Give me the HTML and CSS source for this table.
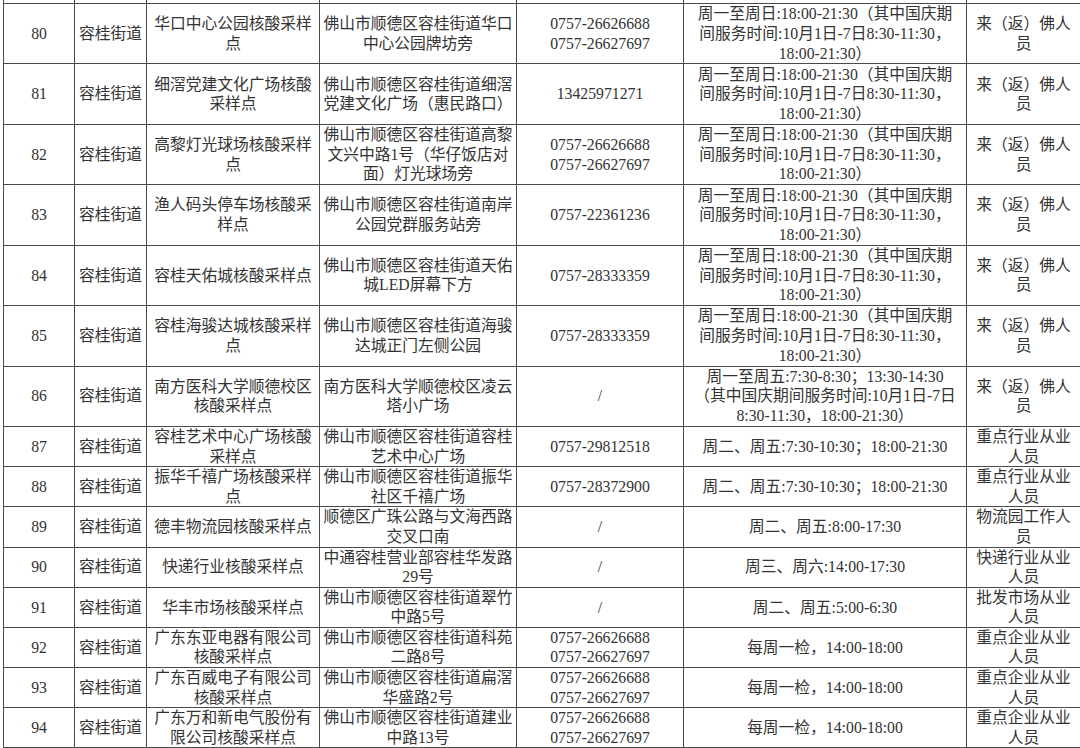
FILE: index.html
```html
<!DOCTYPE html>
<html lang="zh-CN">
<head>
<meta charset="utf-8">
<title>容桂街道核酸采样点</title>
<link rel="stylesheet" href="styles.css">
</head>
<body>
<div class="viewport">
<table class="sites">
<colgroup>
<col class="c-no"><col class="c-street"><col class="c-name"><col class="c-addr"><col class="c-tel"><col class="c-time"><col class="c-who">
</colgroup>
<tbody>
<tr class="cut"><td></td><td></td><td></td><td></td><td></td><td></td><td></td></tr>
<tr class="r3">
<td>80</td><td>容桂街道</td><td>华口中心公园核酸采样<br>点</td><td>佛山市顺德区容桂街道华口<br>中心公园牌坊旁</td><td>0757-26626688<br>0757-26627697</td><td>周一至周日:18:00-21:30（其中国庆期<br>间服务时间:10月1日-7日8:30-11:30，<br>18:00-21:30）</td><td>来（返）佛人<br>员</td>
</tr>
<tr class="r3">
<td>81</td><td>容桂街道</td><td>细滘党建文化广场核酸<br>采样点</td><td>佛山市顺德区容桂街道细滘<br>党建文化广场（惠民路口）</td><td>13425971271</td><td>周一至周日:18:00-21:30（其中国庆期<br>间服务时间:10月1日-7日8:30-11:30，<br>18:00-21:30）</td><td>来（返）佛人<br>员</td>
</tr>
<tr class="r3">
<td>82</td><td>容桂街道</td><td>高黎灯光球场核酸采样<br>点</td><td>佛山市顺德区容桂街道高黎<br>文兴中路1号（华仔饭店对<br>面）灯光球场旁</td><td>0757-26626688<br>0757-26627697</td><td>周一至周日:18:00-21:30（其中国庆期<br>间服务时间:10月1日-7日8:30-11:30，<br>18:00-21:30）</td><td>来（返）佛人<br>员</td>
</tr>
<tr class="r3">
<td>83</td><td>容桂街道</td><td>渔人码头停车场核酸采<br>样点</td><td>佛山市顺德区容桂街道南岸<br>公园党群服务站旁</td><td>0757-22361236</td><td>周一至周日:18:00-21:30（其中国庆期<br>间服务时间:10月1日-7日8:30-11:30，<br>18:00-21:30）</td><td>来（返）佛人<br>员</td>
</tr>
<tr class="r3">
<td>84</td><td>容桂街道</td><td>容桂天佑城核酸采样点</td><td>佛山市顺德区容桂街道天佑<br>城LED屏幕下方</td><td>0757-28333359</td><td>周一至周日:18:00-21:30（其中国庆期<br>间服务时间:10月1日-7日8:30-11:30，<br>18:00-21:30）</td><td>来（返）佛人<br>员</td>
</tr>
<tr class="r3">
<td>85</td><td>容桂街道</td><td>容桂海骏达城核酸采样<br>点</td><td>佛山市顺德区容桂街道海骏<br>达城正门左侧公园</td><td>0757-28333359</td><td>周一至周日:18:00-21:30（其中国庆期<br>间服务时间:10月1日-7日8:30-11:30，<br>18:00-21:30）</td><td>来（返）佛人<br>员</td>
</tr>
<tr class="r3">
<td>86</td><td>容桂街道</td><td>南方医科大学顺德校区<br>核酸采样点</td><td>南方医科大学顺德校区凌云<br>塔小广场</td><td>/</td><td>周一至周五:7:30-8:30；13:30-14:30<br>（其中国庆期间服务时间:10月1日-7日<br>8:30-11:30，18:00-21:30）</td><td>来（返）佛人<br>员</td>
</tr>
<tr class="r2">
<td>87</td><td>容桂街道</td><td>容桂艺术中心广场核酸<br>采样点</td><td>佛山市顺德区容桂街道容桂<br>艺术中心广场</td><td>0757-29812518</td><td>周二、周五:7:30-10:30；18:00-21:30</td><td>重点行业从业<br>人员</td>
</tr>
<tr class="r2">
<td>88</td><td>容桂街道</td><td>振华千禧广场核酸采样<br>点</td><td>佛山市顺德区容桂街道振华<br>社区千禧广场</td><td>0757-28372900</td><td>周二、周五:7:30-10:30；18:00-21:30</td><td>重点行业从业<br>人员</td>
</tr>
<tr class="r2">
<td>89</td><td>容桂街道</td><td>德丰物流园核酸采样点</td><td>顺德区广珠公路与文海西路<br>交叉口南</td><td>/</td><td>周二、周五:8:00-17:30</td><td>物流园工作人<br>员</td>
</tr>
<tr class="r2">
<td>90</td><td>容桂街道</td><td>快递行业核酸采样点</td><td>中通容桂营业部容桂华发路<br>29号</td><td>/</td><td>周三、周六:14:00-17:30</td><td>快递行业从业<br>人员</td>
</tr>
<tr class="r2">
<td>91</td><td>容桂街道</td><td>华丰市场核酸采样点</td><td>佛山市顺德区容桂街道翠竹<br>中路5号</td><td>/</td><td>周二、周五:5:00-6:30</td><td>批发市场从业<br>人员</td>
</tr>
<tr class="r2">
<td>92</td><td>容桂街道</td><td>广东东亚电器有限公司<br>核酸采样点</td><td>佛山市顺德区容桂街道科苑<br>二路8号</td><td>0757-26626688<br>0757-26627697</td><td>每周一检，14:00-18:00</td><td>重点企业从业<br>人员</td>
</tr>
<tr class="r2">
<td>93</td><td>容桂街道</td><td>广东百威电子有限公司<br>核酸采样点</td><td>佛山市顺德区容桂街道扁滘<br>华盛路2号</td><td>0757-26626688<br>0757-26627697</td><td>每周一检，14:00-18:00</td><td>重点企业从业<br>人员</td>
</tr>
<tr class="r2">
<td>94</td><td>容桂街道</td><td>广东万和新电气股份有<br>限公司核酸采样点</td><td>佛山市顺德区容桂街道建业<br>中路13号</td><td>0757-26626688<br>0757-26627697</td><td>每周一检，14:00-18:00</td><td>重点企业从业<br>人员</td>
</tr>
<tr class="r2">
<td></td><td></td><td></td><td></td><td></td><td></td><td></td>
</tr>
</tbody>
</table>
</div>
</body>
</html>
```

FILE: styles.css
```css
html, body {
  margin: 0;
  padding: 0;
  background: #ffffff;
}

.viewport {
  width: 1080px;
  height: 748px;
  overflow: hidden;
  background: #ffffff;
}

.sites {
  border-collapse: collapse;
  table-layout: fixed;
  width: 1077px;
  margin: -37px 0 0 3px;
  font-family: "Liberation Serif", "Noto Sans CJK SC", serif;
  font-size: 15.75px;
  line-height: 19.6px;
  color: #333333;
}

.c-no { width: 71px; }
.c-street { width: 72px; }
.c-name { width: 173px; }
.c-addr { width: 197px; }
.c-tel { width: 167px; }
.c-time { width: 283px; }
.c-who { width: 114px; }

.sites td {
  border: 1px solid #4a4a4a;
  padding: 0;
  text-align: center;
  vertical-align: middle;
  white-space: nowrap;
  overflow: hidden;
}

.sites tr.cut { height: 40px; }
.sites tr.r3 { height: 60.43px; }
.sites tr.r2 { height: 40px; }
```
